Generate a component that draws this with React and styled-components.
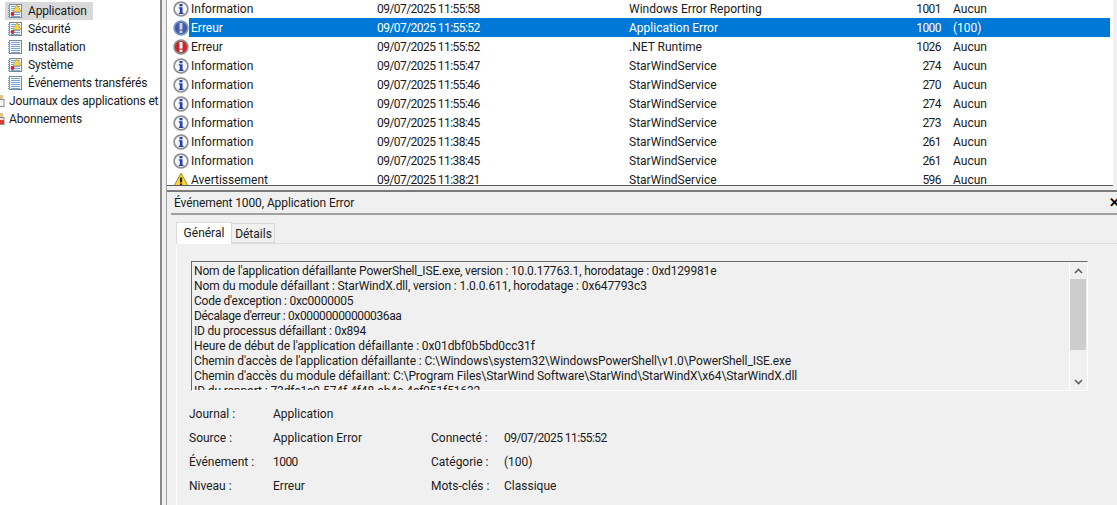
import React from 'react'
import styled, { createGlobalStyle } from 'styled-components'

const treeItems = [
  { label: 'Application', warn: true, active: true },
  { label: 'Sécurité', warn: true },
  { label: 'Installation' },
  { label: 'Système', warn: true },
  { label: 'Événements transférés' },
]

const rows = [
  ['info', 'Information', '09/07/2025 11:55:58', 'Windows Error Reporting', '1001', 'Aucun'],
  ['blue', 'Erreur', '09/07/2025 11:55:52', 'Application Error', '1000', '(100)'],
  ['error', 'Erreur', '09/07/2025 11:55:52', '.NET Runtime', '1026', 'Aucun'],
  ['info', 'Information', '09/07/2025 11:55:47', 'StarWindService', '274', 'Aucun'],
  ['info', 'Information', '09/07/2025 11:55:46', 'StarWindService', '270', 'Aucun'],
  ['info', 'Information', '09/07/2025 11:55:46', 'StarWindService', '274', 'Aucun'],
  ['info', 'Information', '09/07/2025 11:38:45', 'StarWindService', '273', 'Aucun'],
  ['info', 'Information', '09/07/2025 11:38:45', 'StarWindService', '261', 'Aucun'],
  ['info', 'Information', '09/07/2025 11:38:45', 'StarWindService', '261', 'Aucun'],
  ['warn', 'Avertissement', '09/07/2025 11:38:21', 'StarWindService', '596', 'Aucun'],
]

const logLines = [
  { tight: 0.17, text: "Nom de l'application défaillante PowerShell_ISE.exe, version : 10.0.17763.1, horodatage : 0xd129981e" },
  { tight: 0.12, text: 'Nom du module défaillant : StarWindX.dll, version : 1.0.0.611, horodatage : 0x647793c3' },
  { tight: 0.24, text: "Code d'exception : 0xc0000005" },
  { tight: 0.37, text: "Décalage d'erreur : 0x00000000000036aa" },
  { tight: 0.24, text: 'ID du processus défaillant : 0x894' },
  { tight: 0.09, text: "Heure de début de l'application défaillante : 0x01dbf0b5bd0cc31f" },
  { tight: 0.09, text: "Chemin d'accès de l'application défaillante : C:\\Windows\\system32\\WindowsPowerShell\\v1.0\\PowerShell_ISE.exe" },
  { tight: 0.08, text: "Chemin d'accès du module défaillant: C:\\Program Files\\StarWind Software\\StarWind\\StarWindX\\x64\\StarWindX.dll" },
  { tight: 0.12, text: 'ID du rapport : 73dfe1c9-574f-4f48-ab4e-4cf951f51632' },
]

const Global = createGlobalStyle`
  html, body { margin: 0; padding: 0; height: 100%; background: #fff; overflow: hidden; }
  #root { height: 100%; }
  * { box-sizing: border-box; }
`

const Page = styled.div`
  display: flex;
  width: 1117px;
  height: 505px;
  overflow: hidden;
  font-family: Roboto, "Liberation Sans", Arial, sans-serif;
  font-size: 12px;
  color: #1a1a1a;
`

const Sidebar = styled.nav`
  width: 160px;
  flex: none;
  padding-top: 2px;
  background: #fff;
  overflow: hidden;
  letter-spacing: -0.15px;
`

const TreeRow = styled.div`
  display: flex;
  align-items: center;
  gap: 6px;
  width: 88px;
  height: 18px;
  margin-left: 5px;
  padding-left: 3px;
  white-space: nowrap;
  background: ${p => (p.$active ? '#d9d9d9' : 'transparent')};
`

const GroupRow = styled.div`
  display: flex;
  align-items: center;
  gap: 4px;
  height: 18px;
  white-space: nowrap;
`

const Splitter = styled.div`
  width: 7px;
  flex: none;
  background: #f0f0f0;
  border-left: 2px solid #8a8a8a;
  border-right: 1px solid #a0a0a0;
`

const Main = styled.main`
  flex: 1;
  min-width: 0;
  display: flex;
  flex-direction: column;
  background: #f0f0f0;
`

const EventList = styled.div`
  height: 187px;
  flex: none;
  margin-top: -1px;
  padding-right: 3px;
  margin-right: 4px;
  background: #fff;
  border-bottom: 1px solid #5a5a5a;
  overflow: hidden;
`

const EventRow = styled.div`
  display: grid;
  grid-template-columns: 210px 252px 268px 48px 1fr;
  height: 19px;
  align-items: center;
  white-space: nowrap;
  background: ${p => (p.$selected ? '#0078d7' : 'transparent')};
  color: ${p => (p.$selected ? '#fff' : 'inherit')};
`

const LevelCell = styled.div`
  display: flex;
  align-items: center;
  height: 19px;
  padding-left: 6px;
  background: #fff;
`

const LevelText = styled.div`
  flex: 1;
  display: flex;
  align-items: center;
  height: 19px;
  padding-left: 2px;
  background: ${p => (p.$selected ? '#0078d7' : 'transparent')};
`

const Digits = styled.span`
  letter-spacing: -0.55px;
`

const IdCell = styled(Digits)`
  text-align: right;
  padding-right: 4px;
`

const CategoryCell = styled.div`
  padding-left: 8px;
`

const Detail = styled.section`
  flex: 1;
  display: flex;
  flex-direction: column;
  margin-top: 4px;
  background: #f0f0f0;
  border-top: 2px solid #7a7a7a;
  min-height: 0;
`

const DetailHeader = styled.header`
  display: flex;
  align-items: center;
  justify-content: space-between;
  flex: none;
  height: 23px;
  margin-left: 4px;
  padding-left: 3px;
  border-bottom: 2px solid #a0a0a0;
  letter-spacing: -0.1px;
`

const CloseMark = styled.span`
  font-size: 13px;
  font-weight: bold;
  color: #000;
  margin-right: -3px;
`

const Tabs = styled.div`
  display: flex;
  align-items: flex-end;
  flex: none;
  height: 28px;
  margin-left: 9px;
`

const Tab = styled.div`
  display: flex;
  align-items: center;
  justify-content: center;
  position: relative;
  z-index: ${p => (p.$active ? 1 : 0)};
  width: ${p => p.$w}px;
  height: ${p => (p.$active ? 22 : 20)}px;
  padding: ${p => (p.$active ? '0 0 2px' : '1px 0 0 1px')};
  margin-bottom: ${p => (p.$active ? -1 : 0)}px;
  margin-left: ${p => (p.$active ? 0 : -1)}px;
  background: ${p => (p.$active ? '#fff' : '#f0f0f0')};
  border: 1px solid #d9d9d9;
  border-bottom: ${p => (p.$active ? 'none' : '1px solid #d9d9d9')};
`

const TabBody = styled.div`
  flex: 1;
  margin-left: 9px;
  border-top: 1px solid #dcdcdc;
  border-left: 1px solid #fafafa;
  padding: 17px 0 0 14px;
`

const LogBox = styled.div`
  display: flex;
  width: 897px;
  height: 130px;
  border: 1px solid #fff;
  border-top-color: #6a6a6a;
  border-left-color: #6a6a6a;
`

const LogText = styled.div`
  flex: 1;
  padding: 2px 0 0 2px;
  overflow: hidden;
  line-height: 15px;
  white-space: nowrap;
`

const LogLine = styled.div`
  letter-spacing: -${p => p.$tight}px;
`

const ScrollTrack = styled.div`
  width: 18px;
  flex: none;
  display: flex;
  flex-direction: column;
  border-left: 1px solid #fff;
  background: #f0f0f0;
`

const ScrollButton = styled.div`
  height: 17px;
  flex: none;
  display: flex;
  align-items: center;
  justify-content: center;
`

const ScrollThumb = styled.div`
  height: 71px;
  margin-right: 1px;
  background: #cdcdcd;
`

const ScrollGap = styled.div`
  flex: 1;
`

const Props = styled.div`
  display: grid;
  grid-template-columns: 84px 158px 73px 1fr;
  grid-auto-rows: 24px;
  align-items: center;
  margin: 11px 0 0 -2px;
`

const IconSvg = styled.svg`
  flex: none;
  display: block;
`

const Arrow = ({ down }) => (
  <svg width="9" height="6" viewBox="0 0 9 6">
    <path d={down ? 'M1 1l3.5 3.5L8 1' : 'M1 5l3.5-3.5L8 5'} fill="none" stroke="#606060" strokeWidth="1.6" />
  </svg>
)

const LogIcon = ({ warn }) => (
  <IconSvg width="14" height="14" viewBox="0 0 14 14">
    <rect x="1.5" y="0.5" width="12" height="13" fill="#f3f7fb" stroke="#7d8794" />
    {[2, 4, 6, 8, 10, 12].map(y => (
      <path key={y} d={`M0 ${y + 0.5}h2M3 ${y + 0.5}h9`} stroke="#7aa5d2" />
    ))}
    {warn && (
      <>
        <path d="M9 0.5l4 7H5z" fill="#f8d648" stroke="#b9962a" strokeWidth="0.6" />
        <circle cx="4.5" cy="10" r="1.9" fill="#d8232a" />
      </>
    )}
  </IconSvg>
)

const FolderIcon = ({ red }) => (
  <IconSvg width="5" height="14" viewBox="0 0 5 14">
    <rect x="-5" y="5.5" width="9" height="7" fill={red ? '#f7dcd8' : '#f4f4f4'} stroke="#8a8a8a" />
    <rect x="0" y="1" width="3" height="4" fill="#dcc48a" />
    {red && <rect x="0" y="8" width="4" height="4" fill="#d8402f" />}
  </IconSvg>
)

const LevelIcon = ({ kind }) => {
  if (kind === 'warn') {
    return (
      <IconSvg width="16" height="16" viewBox="0 0 16 16">
        <path d="M8 1.2L15.3 14.5H.7z" fill="#fbd62f" stroke="#a98a1c" strokeLinejoin="round" />
        <path d="M8 5.5v5" stroke="#222" strokeWidth="2.2" />
        <path d="M8 11.5v2" stroke="#222" strokeWidth="2.2" />
      </IconSvg>
    )
  }
  const fill = kind === 'error' ? '#c9252b' : kind === 'blue' ? '#4a5b9c' : '#f6f8fc'
  const mark = kind === 'info' ? '#2440ab' : kind === 'blue' ? '#c8cfe8' : '#fff'
  const ring = kind === 'blue' ? '#6f9ad4' : '#8f8f8f'
  return (
    <IconSvg width="16" height="16" viewBox="0 0 16 16">
      <circle cx="8" cy="8" r="6.9" fill={fill} stroke={ring} strokeWidth="1.7" />
      {kind === 'info' ? (
        <>
          <rect x="6.5" y="3" width="3" height="2.3" fill={mark} />
          <path d="M5.8 6.3h3.7v5.5h1v1.3h-4.7v-1.3h1v-4.2h-1z" fill={mark} />
        </>
      ) : (
        <>
          <rect x="6.5" y="3" width="3" height="6.6" fill={mark} />
          <rect x="6.5" y="10.6" width="3" height="2.4" fill={mark} />
        </>
      )}
    </IconSvg>
  )
}

export default function App() {
  return (
    <Page>
      <Global />
      <Sidebar>
        {treeItems.map(item => (
          <TreeRow key={item.label} $active={item.active}>
            <LogIcon warn={item.warn} />
            <span>{item.label}</span>
          </TreeRow>
        ))}
        <GroupRow>
          <FolderIcon />
          <span>Journaux des applications et</span>
        </GroupRow>
        <GroupRow>
          <FolderIcon red />
          <span>Abonnements</span>
        </GroupRow>
      </Sidebar>
      <Splitter />
      <Main>
        <EventList>
          {rows.map(([kind, level, date, source, id, cat], i) => (
            <EventRow key={i} $selected={i === 1}>
              <LevelCell>
                <LevelIcon kind={kind} />
                <LevelText $selected={i === 1}>{level}</LevelText>
              </LevelCell>
              <Digits>{date}</Digits>
              <div>{source}</div>
              <IdCell>{id}</IdCell>
              <CategoryCell>{cat}</CategoryCell>
            </EventRow>
          ))}
        </EventList>
        <Detail>
          <DetailHeader>
            <span>Événement 1000, Application Error</span>
            <CloseMark>✕</CloseMark>
          </DetailHeader>
          <Tabs>
            <Tab $active $w={56}>Général</Tab>
            <Tab $w={44}>Détails</Tab>
          </Tabs>
          <TabBody>
            <LogBox>
              <LogText>
                {logLines.map(line => (
                  <LogLine key={line.text} $tight={line.tight}>{line.text}</LogLine>
                ))}
              </LogText>
              <ScrollTrack>
                <ScrollButton><Arrow /></ScrollButton>
                <ScrollThumb />
                <ScrollGap />
                <ScrollButton><Arrow down /></ScrollButton>
              </ScrollTrack>
            </LogBox>
            <Props>
              <span>Journal :</span><span>Application</span><span /><span />
              <span>Source :</span><span>Application Error</span><span>Connecté :</span><Digits>09/07/2025 11:55:52</Digits>
              <span>Événement :</span><Digits>1000</Digits><span>Catégorie :</span><span>(100)</span>
              <span>Niveau :</span><span>Erreur</span><span>Mots-clés :</span><span>Classique</span>
            </Props>
          </TabBody>
        </Detail>
      </Main>
    </Page>
  )
}
